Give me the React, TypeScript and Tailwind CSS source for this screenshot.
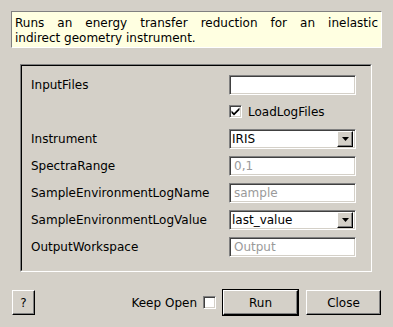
import React from "react";

const FONT = "font-['DejaVu_Sans','Liberation_Sans',sans-serif]";

const sunken =
  "border border-t-[#808080] border-l-[#808080] border-r-white border-b-white shadow-[inset_1px_1px_0_#404040,inset_-1px_-1px_0_#d4d0c8]";
const raised =
  "border border-t-white border-l-white border-r-black border-b-black shadow-[inset_-1px_-1px_0_#808080]";

function TextField({ value, placeholder }: { value?: string; placeholder?: string }) {
  return (
    <div className={`flex h-[20px] w-[127px] items-center bg-white pl-[4px] text-[12px] ${sunken}`}>
      {value ? (
        <span className="text-black">{value}</span>
      ) : (
        <span className="text-[#9a9a9a]">{placeholder}</span>
      )}
    </div>
  );
}

function Combo({ value }: { value: string }) {
  return (
    <div className={`flex h-[20px] w-[127px] items-center bg-white pl-[2px] pr-[2px] text-[12px] text-black ${sunken}`}>
      <span className="flex-1">{value}</span>
      <div className={`flex h-[16px] w-[16px] items-center justify-center bg-[#d4d0c8] ${raised}`}>
        <svg width="7" height="4" viewBox="0 0 7 4">
          <path d="M0 0h7L3.5 4z" fill="#000" />
        </svg>
      </div>
    </div>
  );
}

function CheckBox({ checked }: { checked?: boolean }) {
  return (
    <div className={`flex h-[13px] w-[13px] items-center justify-center bg-white ${sunken}`}>
      {checked && (
        <svg width="9" height="9" viewBox="0 0 9 9">
          <path d="M0.5 3.5l2.5 2.5 5.5-5.5v2.5l-5.5 5.5-2.5-2.5z" fill="#000" />
        </svg>
      )}
    </div>
  );
}

function Row({ label, children }: { label?: string; children: React.ReactNode }) {
  return (
    <div className="flex h-[27px] items-center justify-between">
      <span className="text-[12px] text-black">{label}</span>
      {children}
    </div>
  );
}

export default function App() {
  return (
    <div className={`h-[327px] w-[393px] bg-[#d4d0c8] px-[11px] pt-[11px] ${FONT}`}>
      <div className="h-[37px] w-[371px] border border-t-[#808080] border-l-[#808080] border-r-white border-b-white bg-[#ffffe1] px-[3px] pt-[4px] text-[12px] leading-[15px] text-black">
        <div className="text-justify [text-align-last:justify]">Runs an energy transfer reduction for an inelastic</div>
        <div>indirect geometry instrument.</div>
      </div>

      <div className="ml-[9px] mt-[16px] h-[208px] w-[352px] border border-t-[#808080] border-l-[#808080] border-r-white border-b-white">
        <div className="h-full w-full border border-t-black border-l-black border-r-[#d4d0c8] border-b-[#d4d0c8] pl-[9px] pr-[14px] pt-[5px]">
          <Row label="InputFiles">
            <TextField />
          </Row>
          <Row>
            <div className="flex w-[127px] items-center gap-[6px]">
              <CheckBox checked />
              <span className="text-[12px] text-black">LoadLogFiles</span>
            </div>
          </Row>
          <Row label="Instrument">
            <Combo value="IRIS" />
          </Row>
          <Row label="SpectraRange">
            <TextField placeholder="0,1" />
          </Row>
          <Row label="SampleEnvironmentLogName">
            <TextField placeholder="sample" />
          </Row>
          <Row label="SampleEnvironmentLogValue">
            <Combo value="last_value" />
          </Row>
          <Row label="OutputWorkspace">
            <TextField placeholder="Output" />
          </Row>
        </div>
      </div>

      <div className="mt-[17px] flex h-[27px] items-center">
        <button className={`ml-[1px] flex h-[25px] w-[23px] items-center justify-center bg-[#d4d0c8] text-[12px] text-black ${raised}`}>
          ?
        </button>
        <span className="ml-auto text-[12px] text-black">Keep Open</span>
        <div className="ml-[6px]">
          <CheckBox />
        </div>
        <div className="ml-[6px] border border-black">
          <button className={`flex h-[25px] w-[75px] items-center justify-center bg-[#d4d0c8] text-[12px] text-black ${raised}`}>
            Run
          </button>
        </div>
        <button className={`ml-[7px] mr-[1px] flex h-[25px] w-[75px] items-center justify-center bg-[#d4d0c8] text-[12px] text-black ${raised}`}>
          Close
        </button>
      </div>
    </div>
  );
}
